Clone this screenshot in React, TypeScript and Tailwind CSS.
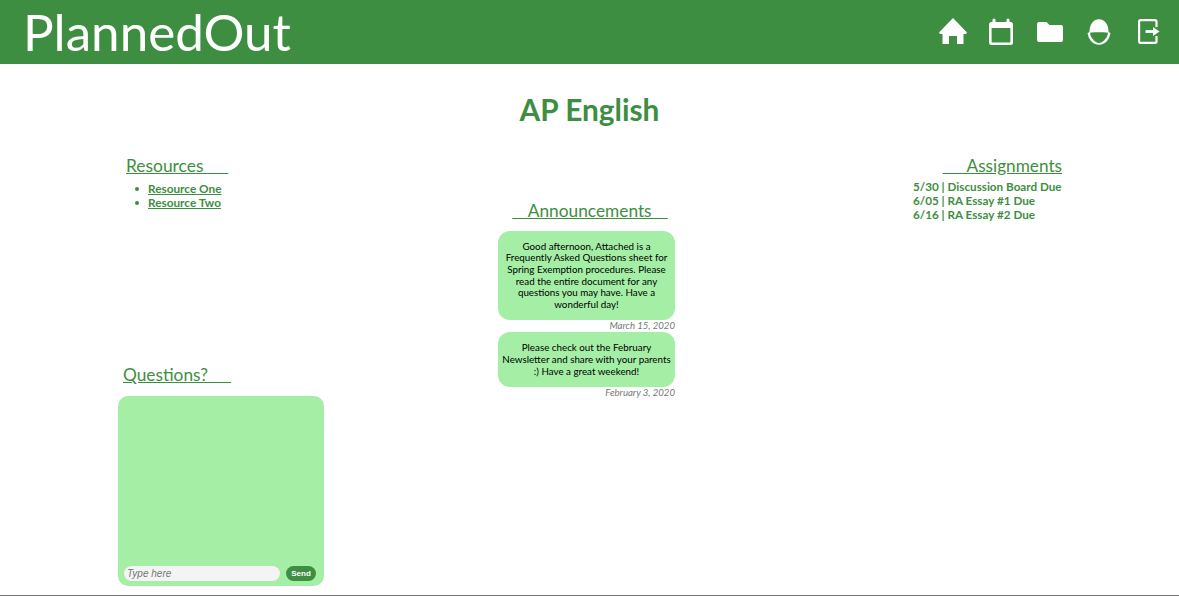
import { useState } from 'react'

const green = 'text-[#3e8e41]'

function HomeIcon() {
  return (
    <svg viewBox="0 0 28 26" className="mb-[2px] h-[26px] w-7" fill="currentColor">
      <path d="M14 0 L28 14.5 L27 16 H24.5 V26 H18 V18 H10 V26 H3.5 V16 H1 L0 14.5 Z" />
    </svg>
  )
}

function CalendarIcon() {
  return (
    <svg viewBox="0 0 24 27" className="mb-[2px] ml-[-2px] h-[27px] w-6" fill="currentColor">
      <path
        fillRule="evenodd"
        d="M5 0.5 Q6.5 0.5 6.5 2 V4 H17.5 V2 Q17.5 0.5 19 0.5 Q20.5 0.5 20.5 2 V4 H21.5 Q24 4 24 6.5 V24.5 Q24 27 21.5 27 H2.5 Q0 27 0 24.5 V6.5 Q0 4 2.5 4 H3.5 V2 Q3.5 0.5 5 0.5 Z M2.6 10 V23.4 Q2.6 24.4 3.6 24.4 H20.4 Q21.4 24.4 21.4 23.4 V10 Z"
      />
    </svg>
  )
}

function FolderIcon() {
  return (
    <svg viewBox="0 0 26 20" className="h-5 w-[26px]" fill="currentColor">
      <path d="M2 0 H9.5 L12.5 3 H24 Q26 3 26 5 V18 Q26 20 24 20 H2 Q0 20 0 18 V2 Q0 0 2 0 Z" />
    </svg>
  )
}

function HelmetIcon() {
  return (
    <svg viewBox="0 0 24 26" className="h-[26px] w-6" fill="none">
      <path d="M2.5 12.5 C2.5 4.5 7 0.2 12 0.2 C17 0.2 21.5 4.5 21.5 12.5 L23.8 15 L0.2 15 Z" fill="currentColor" />
      <path d="M0.8 14 H23.2 C23.2 20 18 25.8 12 25.8 C6 25.8 0.8 20 0.8 14 Z" fill="currentColor" />
      <path d="M3.2 13.6 C8 13 16 13 20.8 13.6 C21.4 18 16 24 12 24 C8 24 2.6 18 3.2 13.6 Z" fill="#3e8e41" />
    </svg>
  )
}

function ExitIcon() {
  return (
    <svg viewBox="0 0 22 25" className="mb-[1px] ml-[3px] h-[25px] w-[22px]" fill="none" stroke="currentColor" strokeWidth="2.2" strokeLinejoin="round">
      <path d="M18.5 8 V2.8 Q18.5 1.1 16.8 1.1 H2.8 Q1.1 1.1 1.1 2.8 V22.2 Q1.1 23.9 2.8 23.9 H16.8 Q18.5 23.9 18.5 22.2 V17" />
      <path d="M7.5 12.5 H16" strokeWidth="2.8" />
      <path d="M15 8 L21.5 12.5 L15 17 Z" fill="currentColor" stroke="none" />
    </svg>
  )
}

const announcements = [
  {
    text: 'Good afternoon, Attached is a Frequently Asked Questions sheet for Spring Exemption procedures. Please read the entire document for any questions you may have. Have a wonderful day!',
    date: 'March 15, 2020',
    pad: 'py-[9.5px]',
  },
  {
    text: 'Please check out the February Newsletter and share with your parents :) Have a great weekend!',
    date: 'February 3, 2020',
    pad: 'py-[10px]',
  },
]

export default function App() {
  const [msg, setMsg] = useState('')

  return (
    <div className="h-[596px] overflow-hidden border-b border-[#777] bg-white font-['Lato','Carlito',sans-serif]">
      <header className="flex h-16 items-center justify-between bg-[#3e8e41] pl-[23px] pr-[19px] text-white">
        <h1 className="text-[51.2px] leading-none">PlannedOut</h1>
        <nav className="flex items-center gap-6">
          <HomeIcon />
          <CalendarIcon />
          <FolderIcon />
          <HelmetIcon />
          <ExitIcon />
        </nav>
      </header>

      <h2 className={`mt-[28px] text-center text-[29.8px] font-bold leading-9 ${green}`}>AP English</h2>

      <div className={`mt-[27px] flex pl-[118px] ${green}`}>
        {/* Resources + chat */}
        <div className="flex h-[431px] w-[206px] flex-col">
          <h3 className="pl-2 text-[17.4px] leading-[22px] [word-spacing:0.5px]">
            <span className="underline">Resources&nbsp;&nbsp;&nbsp;&nbsp;&nbsp;</span>
          </h3>
          <ul className="mt-[5px] pl-[17px] text-[11.8px] font-bold leading-[14px]">
            <li className="flex items-center gap-[9px]">
              <span className="h-1 w-1 rounded-full bg-[#3e8e41]" />
              <a className="underline">Resource One</a>
            </li>
            <li className="flex items-center gap-[9px]">
              <span className="h-1 w-1 rounded-full bg-[#3e8e41]" />
              <a className="underline">Resource Two</a>
            </li>
          </ul>
          <h3 className="mt-auto pl-[5px] text-[17.3px] leading-[22px] [word-spacing:0.2px]">
            <span className="underline">Questions?&nbsp;&nbsp;&nbsp;&nbsp;&nbsp;</span>
          </h3>
          <div className="mt-[10px] flex h-[190px] items-end gap-[6px] rounded-[10px] bg-[#a5eea5] px-[6px] py-[5px]">
            <input
              value={msg}
              onChange={(e) => setMsg(e.target.value)}
              placeholder="Type here"
              className="h-[15px] w-[156px] rounded-full bg-[#f4f4f4] px-[3px] font-['Liberation_Sans',sans-serif] text-[10px] italic text-black outline-none placeholder:text-[#757575]"
            />
            <button className="h-[15px] w-[30px] rounded-full bg-[#3e8e41] font-['Liberation_Sans',sans-serif] text-[8px] font-bold text-white">
              Send
            </button>
          </div>
        </div>

        {/* Announcements */}
        <div className="ml-[174px] w-[177px] pt-[45px]">
          <h3 className="ml-[14px] w-[156px] whitespace-nowrap text-center text-[17.3px] leading-[22px] [word-spacing:-0.4px]">
            <span className="underline">&nbsp;&nbsp;&nbsp;&nbsp;Announcements&nbsp;&nbsp;&nbsp;&nbsp;</span>
          </h3>
          <div className="mt-[9px]">
            {announcements.map((a) => (
              <div key={a.date}>
                <div className={`rounded-xl bg-[#a5eea5] px-[3px] text-center text-[9.8px] leading-[11.7px] text-black ${a.pad}`}>
                  {a.text}
                </div>
                <p className="h-[12px] text-right text-[9.6px] italic leading-[12px] text-[#777]">{a.date}</p>
              </div>
            ))}
          </div>
        </div>

        {/* Assignments */}
        <div className="ml-[238px] w-[149px]">
          <h3 className="whitespace-nowrap text-right text-[17.2px] leading-[22px] [word-spacing:0.5px]">
            <span className="underline">&nbsp;&nbsp;&nbsp;&nbsp;&nbsp;Assignments</span>
          </h3>
          <div className="mt-[2px] whitespace-nowrap text-[11.7px] font-bold leading-[14px]">
            <p>5/30 | Discussion Board Due</p>
            <p>6/05 | RA Essay #1 Due</p>
            <p>6/16 | RA Essay #2 Due</p>
          </div>
        </div>
      </div>
    </div>
  )
}
